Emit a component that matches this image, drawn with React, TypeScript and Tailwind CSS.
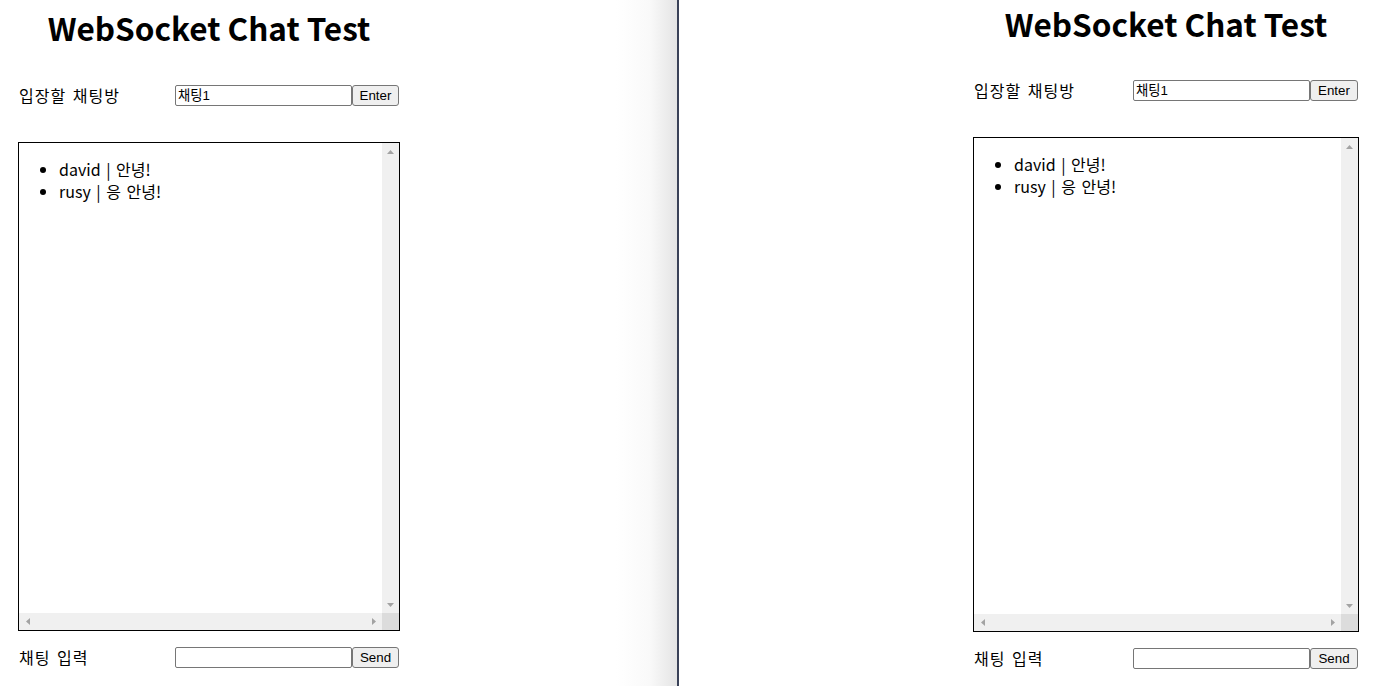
import React from "react";

const KR = "font-['Noto_Sans_CJK_KR','Noto_Sans',sans-serif]";
const CTRL = "font-['Liberation_Sans','Noto_Sans_CJK_KR',sans-serif]";

function Tri({ dir }: { dir: "up" | "down" | "left" | "right" }) {
  const pts =
    dir === "up"
      ? "0,4 7,4 3.5,0"
      : dir === "down"
      ? "0,0 7,0 3.5,4"
      : dir === "left"
      ? "4,0 4,7 0,3.5"
      : "0,0 0,7 4,3.5";
  const w = dir === "up" || dir === "down" ? 7 : 4;
  const h = dir === "up" || dir === "down" ? 4 : 7;
  return (
    <svg width={w} height={h} viewBox={`0 0 ${w} ${h}`}>
      <polygon points={pts} fill="#a3a3a3" />
    </svg>
  );
}

function ChatBox({ w, h }: { w: string; h: string }) {
  return (
    <div className={`${w} ${h} border border-black flex flex-col bg-white`}>
      <div className="flex flex-1 min-h-0">
        <div className="flex-1">
          <ul
            className={`${KR} list-disc pl-[40px] mt-[16px] text-[16px] leading-[21.5px] [word-spacing:2px] text-black`}
          >
            <li>david | 안녕!</li>
            <li>rusy | 응 안녕!</li>
          </ul>
        </div>
        <div className="w-[17px] bg-[#f0f0f0] flex flex-col justify-between">
          <div className="h-[17px] flex items-center justify-center">
            <Tri dir="up" />
          </div>
          <div className="h-[17px] flex items-center justify-center">
            <Tri dir="down" />
          </div>
        </div>
      </div>
      <div className="h-[17px] flex">
        <div className="flex-1 bg-[#f0f0f0] flex justify-between items-center">
          <div className="w-[17px] flex justify-center">
            <Tri dir="left" />
          </div>
          <div className="w-[17px] flex justify-center">
            <Tri dir="right" />
          </div>
        </div>
        <div className="w-[17px] bg-[#dcdcdc]" />
      </div>
    </div>
  );
}

function Row({
  label,
  value,
  btn,
  labelW,
  btnW,
}: {
  label: string;
  value: string;
  btn: string;
  labelW: string;
  btnW: string;
}) {
  return (
    <div className="flex items-center h-[21px]">
      <div
        className={`${labelW} pl-[1px] ${KR} text-[16px] leading-[21px] tracking-[1px] [word-spacing:2px] text-black`}
      >
        {label}
      </div>
      <div
        className={`w-[177px] h-[21px] border border-[#767676] rounded-[2px] bg-white px-[2px] flex items-center ${CTRL} text-[13.33px] text-black`}
      >
        {value}
      </div>
      <div
        className={`${btnW} h-[21px] border border-[#767676] rounded-[3px] bg-[#efefef] flex items-center justify-center ${CTRL} text-[13.33px] text-black`}
      >
        {btn}
      </div>
    </div>
  );
}

export default function App() {
  return (
    <div className="w-[1375px] h-[686px] flex bg-white overflow-hidden">
      <div className="w-[677px] h-full bg-[linear-gradient(to_right,#ffffff_91%,#f9f9f9_96%,#e4e4e4_100%)]">
        <div className="ml-[18px] w-[382px] flex flex-col">
          <h1 className={`${KR} text-center text-[31.5px] font-bold leading-[48px] mt-[3px] text-black`}>
            WebSocket Chat Test
          </h1>
          <div className="mt-[34px]">
            <Row label="입장할 채팅방" value="채팅1" btn="Enter" labelW="w-[157px]" btnW="w-[47px]" />
          </div>
          <div className="mt-[36px]">
            <ChatBox w="w-[382px]" h="h-[489px]" />
          </div>
          <div className="mt-[16px]">
            <Row label="채팅 입력" value="" btn="Send" labelW="w-[157px]" btnW="w-[47px]" />
          </div>
        </div>
      </div>
      <div className="w-[2px] h-full bg-[#3a4258]" />
      <div className="flex-1 h-full bg-white">
        <div className="ml-[294px] w-[386px] flex flex-col">
          <h1 className={`${KR} text-center text-[31.5px] font-bold leading-[48px] mt-[-1px] text-black`}>
            WebSocket Chat Test
          </h1>
          <div className="mt-[33px]">
            <Row label="입장할 채팅방" value="채팅1" btn="Enter" labelW="w-[160px]" btnW="w-[48px]" />
          </div>
          <div className="mt-[36px]">
            <ChatBox w="w-[386px]" h="h-[495px]" />
          </div>
          <div className="mt-[16px]">
            <Row label="채팅 입력" value="" btn="Send" labelW="w-[160px]" btnW="w-[48px]" />
          </div>
        </div>
      </div>
    </div>
  );
}
